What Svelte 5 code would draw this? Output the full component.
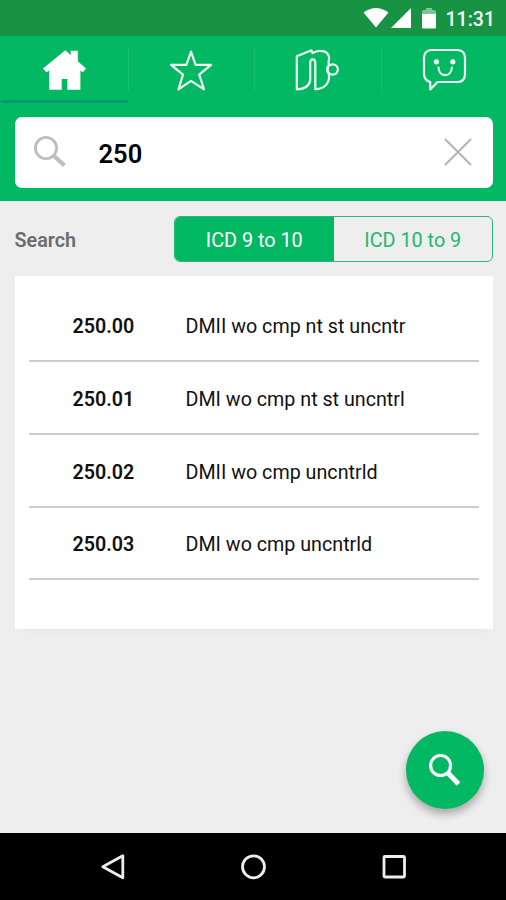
<script lang="ts">
    let query = '250';
    let direction = '9to10';

    const codes = [
        { code: '250.00', description: 'DMII wo cmp nt st uncntr' },
        { code: '250.01', description: 'DMI wo cmp nt st uncntrl' },
        { code: '250.02', description: 'DMII wo cmp uncntrld' },
        { code: '250.03', description: 'DMI wo cmp uncntrld' }
    ];
</script>

<div class="screen">
    <div class="status-bar">
        <svg class="wifi" viewBox="0 0 26 20"><path d="M.5 4.5Q13-4.5 25.5 4.5L13 19.5Z" /></svg>
        <svg class="signal" viewBox="0 0 20 20"><path d="M0 20 20 0V20Z" /></svg>
        <svg class="battery" viewBox="0 0 14 21">
            <path class="faded" d="M0 6V3.5Q0 2 2 2H4V0H10V2H12Q14 2 14 3.5V6Z" />
            <path d="M0 6H14V19.5Q14 20.5 13 20.5H1Q0 20.5 0 19.5Z" />
        </svg>
        <span class="time">11:31</span>
    </div>

    <header>
        <nav class="tabs">
            <button class="tab active" aria-label="Home">
                <svg viewBox="0 0 44 44">
                    <path class="solid" d="M23.3 2.3 28.7 7V2.7H35.8V13.2L44 20.5 40.8 24.2 38.4 22.4V41.8H25.4V31H19.7V41.8H7.2V22.4L4.4 24.2 1 20.5Z" />
                </svg>
            </button>
            <button class="tab" aria-label="Favorites">
                <svg viewBox="0 0 44 44">
                    <path d="M22 3.6 26.6 16.8H42L30.2 26.6 35 41.3 22 32.8 9.5 41.3 14 26.6 2 16.8H17.4Z" />
                </svg>
            </button>
            <button class="tab" aria-label="Network">
                <svg viewBox="0 0 44 44">
                    <path d="M1.8 8.2 16.5 2.3 17.5 5.2C21 2.8 25 2.5 28 3.2 33 4.2 35.3 9 33.7 12.8V17.5A5.5 5.5 0 0 0 33.7 25.5C35.5 33 31 41.3 20.3 41.2V15Q20.3 11.4 17.7 11.4 15.2 11.4 15.2 15V32Q14 40.8 1.8 41.3Z" />
                    <circle cx="37.7" cy="21.5" r="5.1" />
                </svg>
            </button>
            <button class="tab" aria-label="Messages">
                <svg viewBox="0 0 44 44">
                    <path d="M9.5 2H35.5Q43 2.5 43 10V26Q43 33.8 35.5 34H15.5L8.2 41.5V34Q2 32 2 26V10Q2 2.5 9.5 2Z" />
                    <circle class="solid" cx="14.4" cy="13.8" r="2.6" />
                    <circle class="solid" cx="30.8" cy="13.8" r="2.6" />
                    <path d="M16.6 19.7C17 29.5 29.2 29.5 29.8 19.7" />
                </svg>
            </button>
        </nav>

        <div class="search-box">
            <svg class="search-icon" viewBox="0 0 32 32">
                <circle cx="12" cy="12" r="10.6" />
                <path d="M20 20 30.5 29.5" />
            </svg>
            <span class="query">{query}</span>
            <svg class="clear-icon" viewBox="0 0 28 28"><path d="M1 1 27 27M27 1 1 27" /></svg>
        </div>
    </header>

    <main>
        <div class="filter">
            <span class="label">Search</span>
            <div class="toggle">
                <button class:selected={direction === '9to10'} on:click={() => (direction = '9to10')}>ICD 9 to 10</button>
                <button class:selected={direction === '10to9'} on:click={() => (direction = '10to9')}>ICD 10 to 9</button>
            </div>
        </div>

        <div class="results">
            {#each codes as entry}
                <div class="row">
                    <span class="code">{entry.code}</span>
                    <span class="description">{entry.description}</span>
                </div>
            {/each}
        </div>

        <button class="fab" aria-label="Search codes">
            <svg viewBox="0 0 32 32">
                <circle cx="11.6" cy="11.5" r="10" />
                <path d="M19 19 29.5 30" />
            </svg>
        </button>
    </main>

    <footer>
        <svg viewBox="0 0 28 28"><path d="M4.8 13.8 24.8 2.8V24.8Z" /></svg>
        <svg viewBox="0 0 28 28"><circle cx="14.5" cy="13.8" r="11" /></svg>
        <svg viewBox="0 0 28 28"><rect x="4" y="3.5" width="20.5" height="20.5" rx="1" /></svg>
    </footer>
</div>

<style>
    :global(body) {
        margin: 0;
    }

    .screen {
        display: flex;
        flex-direction: column;
        width: 506px;
        height: 900px;
        overflow: hidden;
        background: #eee;
        color: #111;
        font-family: Roboto, "Liberation Sans", sans-serif;
    }

    button {
        margin: 0;
        padding: 0;
        border: 0;
        background: none;
        font-family: inherit;
    }

    svg {
        display: block;
        flex-shrink: 0;
        fill: none;
    }

    .status-bar {
        display: flex;
        align-items: center;
        justify-content: flex-end;
        height: 36px;
        padding-right: 11px;
        box-sizing: border-box;
        background: #189344;
        color: #f1fff5;
    }

    .status-bar svg {
        fill: #fff;
    }

    .wifi {
        width: 26px;
        height: 20px;
        margin-right: 2px;
    }

    .signal {
        width: 20px;
        height: 20px;
        margin-right: 11px;
    }

    .battery {
        width: 14px;
        height: 21px;
        margin-right: 10px;
    }

    .faded {
        opacity: .45;
    }

    .time {
        font-size: 19.5px;
        font-weight: 500;
        line-height: 36px;
        padding-top: 3px;
    }

    header {
        height: 165px;
        background: #03b862;
    }

    .tabs {
        display: grid;
        grid-template-columns: repeat(4, 126.6px);
        height: 67px;
        padding-left: 1px;
    }

    .tab {
        position: relative;
        display: flex;
        justify-content: center;
        padding-top: 12px;
        border-bottom: 3px solid transparent;
    }

    .tab.active {
        border-bottom-color: #07996f;
    }

    .tab:not(:last-child)::after {
        content: "";
        position: absolute;
        top: 11px;
        right: -1px;
        width: 1px;
        height: 45px;
        background: #18bf70;
    }

    .tab svg {
        width: 44px;
        height: 44px;
        stroke: #effff4;
        stroke-width: 2.2;
        stroke-linejoin: round;
        stroke-linecap: round;
        overflow: visible;
    }

    .tab .solid {
        fill: #fff;
        stroke: none;
    }

    .search-box {
        display: flex;
        align-items: center;
        height: 71px;
        margin: 14px 13.5px 0 14.5px;
        padding: 0 21px 1px 19px;
        box-sizing: border-box;
        border-radius: 7px;
        background: #fff;
    }

    .search-icon {
        width: 32px;
        height: 32px;
        stroke: #bdbdbd;
        stroke-width: 2.8;
    }

    .search-icon path {
        stroke-width: 4.2;
    }

    .query {
        flex: 1;
        margin-left: 33px;
        padding-top: 3px;
        font-size: 25.5px;
        font-weight: 600;
        color: #000;
    }

    .clear-icon {
        width: 28px;
        height: 28px;
        stroke: #b8b8b8;
        stroke-width: 2.3;
    }

    main {
        position: relative;
        flex: 1;
        padding: 15px 13.5px 0 14.5px;
    }

    .filter {
        display: flex;
        align-items: center;
        justify-content: space-between;
        height: 46px;
    }

    .label {
        padding-top: 2px;
        font-size: 19.8px;
        font-weight: 600;
        color: #6c6c6c;
    }

    .toggle {
        display: flex;
        width: 319px;
        height: 46px;
        box-sizing: border-box;
        border: 1.5px solid #29b978;
        border-radius: 6px;
        overflow: hidden;
    }

    .toggle button {
        flex: 1;
        padding-top: 2px;
        font-size: 19.8px;
        color: #1fb870;
    }

    .toggle .selected {
        flex: 0 0 159.5px;
        background: #03b862;
        color: #fff;
    }

    .results {
        height: 353px;
        margin-top: 14px;
        padding: 13.5px 14px 0;
        box-sizing: border-box;
        background: #fff;
        box-shadow: 0 8px 6px -7px #e4e4e4;
    }

    .row {
        display: flex;
        align-items: center;
        height: 72.7px;
        padding-top: 4px;
        box-sizing: border-box;
        border-bottom: 2px solid #ccc;
    }

    .code {
        width: 113px;
        padding-left: 44px;
        font-size: 19.7px;
        font-weight: 600;
    }

    .description {
        font-size: 19.7px;
    }

    .fab {
        position: absolute;
        right: 22px;
        bottom: 24px;
        display: flex;
        align-items: center;
        justify-content: center;
        width: 78px;
        height: 78px;
        border-radius: 50%;
        background: #03b862;
        box-shadow: 0 5px 9px rgba(0, 0, 0, .3);
    }

    .fab svg {
        width: 32px;
        height: 32px;
        stroke: #fff;
        stroke-width: 3.2;
    }

    .fab path {
        stroke-width: 5;
    }

    footer {
        display: flex;
        align-items: center;
        justify-content: space-between;
        height: 67px;
        padding: 0 98px;
        box-sizing: border-box;
        background: #000;
    }

    footer svg {
        width: 28px;
        height: 28px;
        stroke: #eee;
        stroke-width: 2.8;
        stroke-linejoin: round;
    }
</style>
